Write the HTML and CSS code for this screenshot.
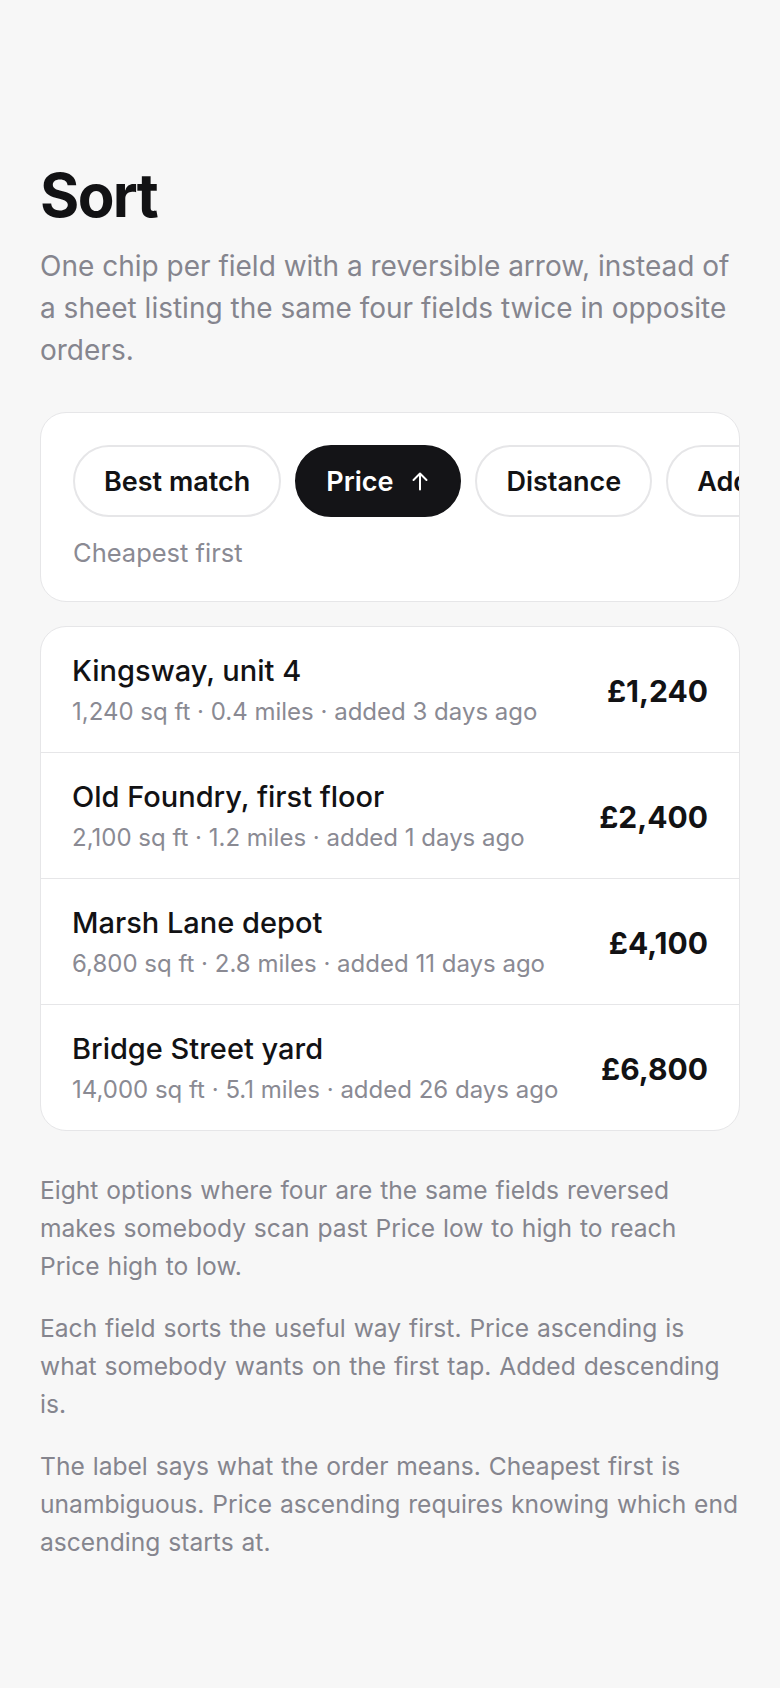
FILE: index.html
```html
<!DOCTYPE html>
<html lang="en">
<head>
    <meta charset="UTF-8">
    <meta name="viewport" content="width=device-width, initial-scale=1.0">
    <title>Sort</title>
    <link rel="stylesheet" href="styles.css">
</head>
<body>
    <main class="page">
        <h1>Sort</h1>
        <p class="lead">One chip per field with a reversible arrow, instead of a sheet listing the same four fields twice in opposite orders.</p>

        <!-- Sort chips -->
        <section class="card sort-card">
            <div class="chips">
                <button class="chip">Best match</button>
                <button class="chip active">Price
                    <svg width="18" height="20" viewBox="0 0 18 20" fill="none" stroke="currentColor" stroke-width="2" stroke-linecap="round" stroke-linejoin="round"><path d="M9 18.5V2.5M2.5 9L9 2.5L15.5 9"/></svg>
                </button>
                <button class="chip">Distance</button>
                <button class="chip">Added</button>
            </div>
            <p class="sort-label">Cheapest first</p>
        </section>

        <!-- Results -->
        <section class="card results">
            <div class="row">
                <div class="info">
                    <div class="title">Kingsway, unit 4</div>
                    <div class="meta">1,240 sq ft · 0.4 miles · added 3 days ago</div>
                </div>
                <div class="price">£1,240</div>
            </div>
            <div class="row">
                <div class="info">
                    <div class="title">Old Foundry, first floor</div>
                    <div class="meta">2,100 sq ft · 1.2 miles · added 1 days ago</div>
                </div>
                <div class="price">£2,400</div>
            </div>
            <div class="row">
                <div class="info">
                    <div class="title">Marsh Lane depot</div>
                    <div class="meta">6,800 sq ft · 2.8 miles · added 11 days ago</div>
                </div>
                <div class="price">£4,100</div>
            </div>
            <div class="row">
                <div class="info">
                    <div class="title">Bridge Street yard</div>
                    <div class="meta">14,000 sq ft · 5.1 miles · added 26 days ago</div>
                </div>
                <div class="price">£6,800</div>
            </div>
        </section>

        <div class="notes">
            <p>Eight options where four are the same fields reversed makes somebody scan past Price low to high to reach Price high to low.</p>
            <p>Each field sorts the useful way first. Price ascending is what somebody wants on the first tap. Added descending is.</p>
            <p>The label says what the order means. Cheapest first is unambiguous. Price ascending requires knowing which end ascending starts at.</p>
        </div>
    </main>
</body>
</html>
```

FILE: styles.css
```css
/* Global Styles */
* {
    margin: 0;
    padding: 0;
    box-sizing: border-box;
}

body {
    font-family: 'Inter', 'Noto Sans', sans-serif;
    background-color: #f7f7f7;
    color: #121214;
}

.page {
    padding: 162px 40px 80px;
}

h1 {
    font-size: 60px;
    line-height: 66px;
    font-weight: 700;
    letter-spacing: -0.027em;
}

.lead {
    margin-top: 17px;
    font-size: 28px;
    line-height: 42px;
    color: #85858e;
}

.card {
    background-color: white;
    border: 1px solid #e6e6e8;
    border-radius: 26px;
    overflow: hidden;
}

/* Sort chips */
.sort-card {
    margin-top: 41px;
    padding: 32px 32px 30px;
}

.chips {
    display: flex;
    gap: 14px;
    margin-right: -32px;
    overflow-x: auto;
    scrollbar-width: none;
}

.chip {
    flex-shrink: 0;
    display: flex;
    align-items: center;
    gap: 18px;
    height: 72px;
    padding: 0 29px;
    border: 2px solid #e6e6e8;
    border-radius: 36px;
    background-color: white;
    font-family: inherit;
    font-size: 27px;
    font-weight: 600;
    color: #121214;
    cursor: pointer;
}

.chip.active {
    background-color: #141417;
    border-color: #141417;
    color: white;
    padding-right: 30px;
}

.sort-label {
    margin-top: 18px;
    font-size: 25.5px;
    line-height: 36px;
    color: #8a8a93;
}

/* Results */
.results {
    margin-top: 24px;
}

.row {
    display: flex;
    align-items: center;
    justify-content: space-between;
    gap: 20px;
    padding: 27px 31px 24px;
    border-top: 1px solid #e6e6e8;
}

.row:first-child {
    border-top: none;
}

.title {
    font-size: 29px;
    line-height: 34px;
    font-weight: 500;
}

.meta {
    margin-top: 8px;
    font-size: 24px;
    line-height: 32px;
    color: #8a8a93;
}

.price {
    font-size: 30px;
    font-weight: 700;
}

/* Notes */
.notes {
    margin-top: 40px;
}

.notes p {
    font-size: 24.6px;
    line-height: 38px;
    word-spacing: 1px;
    color: #85858e;
    margin-bottom: 24px;
}
```
